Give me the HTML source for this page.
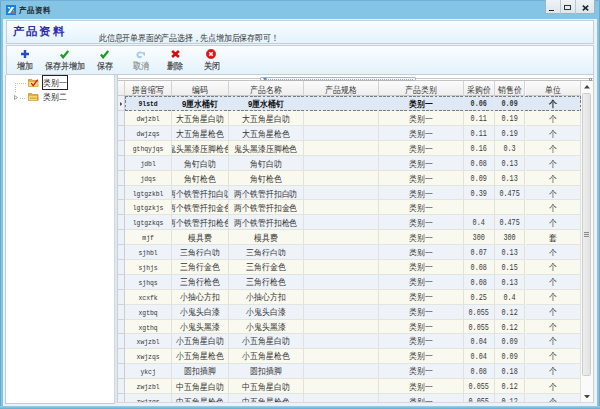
<!DOCTYPE html>
<html><head><meta charset="utf-8">
<style>
*{margin:0;padding:0;box-sizing:border-box}
html,body{width:600px;height:409px;overflow:hidden}
body{position:relative;background:#84c4e4;font-family:"Liberation Sans",sans-serif;color:#333}
.abs{position:absolute}
#frameL{left:0;top:0;width:1px;height:409px;background:#6aa8cc}
#frameB{left:0;top:406px;width:600px;height:3px;background:linear-gradient(#9ccfea,#78bbe0 60%,#68a8cf)}
#frameT{left:0;top:0;width:600px;height:1px;background:#72b0d6}
#frameR{left:599px;top:0;width:1px;height:409px;background:#6aa8cc}
#client{left:3px;top:19px;width:594px;height:387px;background:#eaf3f9}
#ticon{left:5.9px;top:4.5px;width:10.3px;height:10.5px;background:#1a7fd0}
#ttext{left:18.5px;top:4.6px;font-size:7.8px;line-height:12px;color:#111;white-space:nowrap;-webkit-text-stroke:0.25px #222;transform:scaleY(1.08)}
.wb{top:0;height:14.3px;background:linear-gradient(#eef3f6,#dfe6eb);border:1px solid #9fb4c2;border-top:none}
#pHead{left:5.8px;top:20.3px;width:588.2px;height:23.4px;border:1px solid #c5ced6;background:linear-gradient(#fbfdff,#e3f2fb)}
#title{left:12.6px;top:24.2px;font-size:11.8px;line-height:14px;letter-spacing:1.35px;font-weight:bold;color:#2c2cac;white-space:nowrap;transform:scaleY(0.97)}
#sub{left:99px;top:32.6px;font-size:7.55px;letter-spacing:-0.2px;line-height:10px;color:#333;white-space:nowrap;transform:scaleY(1.13);transform-origin:0 0}
#pTool{left:5.8px;top:44.7px;width:588.2px;height:30.8px;border:1px solid #c5ced6;box-shadow:0 1px 0 #d3dbe2;background:linear-gradient(#fbfdff,#e3f2fb)}
.tl{top:61.2px;font-size:7.8px;line-height:10px;color:#3a3a3a;white-space:nowrap;transform:scaleY(1.12);transform-origin:0 0;-webkit-text-stroke:0.15px #444}
#pTree{left:5px;top:75px;width:109px;height:328.7px;border:1px solid #c2cbd3;border-top:none;border-right:none;background:#fff}
#split{left:114px;top:75px;width:3px;height:328.7px;background:#dfe8ef;border-left:1px solid #cfd9e1}
#pGrid{left:117px;top:75px;width:476.5px;height:328px;border:1px solid #c8d0d6;border-top:none;border-bottom-color:#d2dae0;background:#fff}
#grid{left:117.5px;top:81px;width:463.3px;height:320.8px;overflow:hidden}
.hdr{position:absolute;left:0;top:0;width:100%;height:14px}
.hc{position:absolute;top:0;height:14px;background:linear-gradient(#fbfbfb,#eeeeee);border-right:1px solid #d3d3d3;border-bottom:1px solid #c8c8c8;font-size:7.6px;text-align:center;color:#333;white-space:nowrap;overflow:hidden}
.hc span{display:inline-block;transform:translateY(1.3px) scaleY(1.15)}
.row{position:absolute;left:0;width:100%}
.c{position:absolute;top:0;height:100%;border-right:1px solid #e2e2dc;border-bottom:1px solid #e2e4e0;text-align:center;white-space:nowrap;overflow:hidden;color:#333;line-height:14px}
.rh{position:absolute;top:0;height:100%;background:#eef2f8;border-right:1px solid #c6ced8;border-bottom:1px solid #cdd4dc}
.c{display:flex;justify-content:center}
.c span{display:block;line-height:14px;height:14px;flex:none}
.cn span{font-size:7.8px;letter-spacing:-0.12px;transform:translateY(1.2px) scaleY(1.15)}
.py span{font-family:"Liberation Mono",monospace;font-size:6.4px;transform:translateY(1.6px)}
.num span{font-family:"Liberation Mono",monospace;font-size:6.8px;transform:translateY(1px) scaleY(1.2);color:#3a3a3a}
.sel .c{font-weight:bold;color:#111;border-right-color:#e4eaf2}
.sel .py span{transform:translateY(2px)}
.dh{height:1px;background:repeating-linear-gradient(90deg,#7c7c7c 0 2.8px,transparent 2.8px 4.3px)}
.dv{width:1px;background:repeating-linear-gradient(180deg,#7c7c7c 0 2.8px,transparent 2.8px 4.3px)}
#sb{left:581px;top:81px;width:12px;height:321px;background:#fafafa}
#thumb{left:582.3px;top:92.5px;width:9.2px;height:283.8px;background:linear-gradient(90deg,#eeeeee,#e2e2e2);border:1px solid #cdcdcd;border-radius:1.5px}
</style></head><body>
<div id="frameL" class="abs"></div><div id="frameR" class="abs"></div><div id="frameT" class="abs"></div><div id="frameB" class="abs"></div>
<div id="client" class="abs"></div>
<!-- title bar -->
<div id="ticon" class="abs"><svg width="10.3" height="10.5" viewBox="0 0 10.3 10.5" style="position:absolute;left:0;top:0"><path d="M1.5 2.1 L4.3 2.1 L3.3 4.2Z" fill="#f4f8fc"/><path d="M5.6 2.1 L8.3 2.1 L4.2 8.3 L1.6 8.3Z" fill="#eef2f6"/><path d="M7.6 5.1 L9.2 8.4 L5.9 8.4Z" fill="#e8682a"/><circle cx="7.6" cy="5.6" r="0.5" fill="#f0c030"/></svg></div>
<div id="ttext" class="abs">产品资料</div>
<div class="abs wb" style="left:545px;width:50px"></div>
<div class="abs" style="left:560px;top:0;width:1px;height:14px;background:#b9c8d2"></div>
<div class="abs" style="left:575px;top:0;width:1px;height:14px;background:#b9c8d2"></div>
<div class="abs" style="left:548.5px;top:9.5px;width:5.5px;height:1.6px;background:#222"></div>
<div class="abs" style="left:564px;top:4.5px;width:7px;height:5.5px;border:1px solid #333;border-top-width:1.6px"></div>
<svg class="abs" style="left:582px;top:4.5px" width="7" height="6" viewBox="0 0 7 6"><path d="M0.8 0.6 L6.2 5.4 M6.2 0.6 L0.8 5.4" stroke="#222" stroke-width="1.5"/></svg>
<!-- header panel -->
<div id="pHead" class="abs"></div>
<div id="title" class="abs">产品资料</div>
<div id="sub" class="abs">此信息开单界面的产品选择，先点增加后保存即可！</div>
<!-- toolbar -->
<div id="pTool" class="abs"></div>
<svg class="abs" style="left:21px;top:50.2px" width="8" height="8" viewBox="0 0 8 8"><path d="M2.8 0 H5.2 V2.8 H8 V5.2 H5.2 V8 H2.8 V5.2 H0 V2.8 H2.8Z" fill="#1f4fc4"/></svg>
<div class="abs tl" style="left:17.2px">增加</div>
<svg class="abs" style="left:60px;top:50px" width="9" height="9" viewBox="0 0 9 9"><path d="M0.9 4.6 L3.1 7.3 L8.3 0.9" stroke="#16a016" stroke-width="2.3" fill="none"/></svg>
<div class="abs tl" style="left:45.3px">保存并增加</div>
<svg class="abs" style="left:100px;top:50px" width="9" height="9" viewBox="0 0 9 9"><path d="M0.9 4.6 L3.1 7.3 L8.3 0.9" stroke="#16a016" stroke-width="2.3" fill="none"/></svg>
<div class="abs tl" style="left:97.3px">保存</div>
<svg class="abs" style="left:135px;top:50px" width="11" height="9" viewBox="0 0 11 9"><path d="M6.6 3.2 A2.4 2.4 0 1 0 6.6 6.4" stroke="#a8c8ec" stroke-width="1.9" fill="none"/><path d="M5.8 2.2 L10 2.2 L10 6.2Z" fill="#a8c8ec"/></svg>
<div class="abs tl" style="left:132.7px;color:#b4b4b4">取消</div>
<svg class="abs" style="left:171px;top:50.2px" width="9" height="8" viewBox="0 0 9 8"><path d="M1.1 1 L7.9 7 M7.9 1 L1.1 7" stroke="#d80c0c" stroke-width="2.6"/></svg>
<div class="abs tl" style="left:167.3px">删除</div>
<svg class="abs" style="left:206.2px;top:48.8px" width="10" height="10" viewBox="0 0 10 10"><circle cx="5" cy="5" r="4.7" fill="#e61212" stroke="#c02020" stroke-width="0.6"/><path d="M3.2 3.2 L6.8 6.8 M6.8 3.2 L3.2 6.8" stroke="#fff" stroke-width="1.5"/></svg>
<div class="abs tl" style="left:204px">关闭</div>
<!-- tree -->
<div id="pTree" class="abs"></div><div id="split" class="abs"></div>
<div class="abs" style="left:14.5px;top:83px;width:11px;height:1px;background:repeating-linear-gradient(90deg,#bdbdbd 0 1px,transparent 1px 2px)"></div>
<div class="abs" style="left:14.5px;top:83px;width:1px;height:9px;background:repeating-linear-gradient(180deg,#bdbdbd 0 1px,transparent 1px 2px)"></div>
<div class="abs" style="left:20px;top:97.5px;width:5.5px;height:1px;background:repeating-linear-gradient(90deg,#c4c4c4 0 1px,transparent 1px 2px)"></div>
<svg class="abs" style="left:14px;top:95px" width="4" height="5" viewBox="0 0 4 5"><path d="M0.5 0.5 L3.5 2.5 L0.5 4.5Z" fill="#fff" stroke="#8a8a8a" stroke-width="0.8"/></svg>
<svg class="abs" style="left:28px;top:79.2px" width="10.5" height="8" viewBox="0 0 10.5 8"><path d="M0.4 0.6 H3.8 L4.8 1.6 H10 V7.6 H0.4Z" fill="#e2b440" stroke="#b98a18" stroke-width="0.7"/><path d="M0.8 3 H9.7 V7.3 H0.8Z" fill="#f7dc80"/><path d="M3.2 4.2 L5.2 6.6 L9.6 0.6" stroke="#e01818" stroke-width="1.3" fill="none"/></svg>
<div class="abs" style="left:42px;top:75.4px;width:26px;height:14.3px;border:1px solid #222;background:#fff"></div>
<div class="abs" style="left:43.3px;top:78.9px;font-size:7.7px;line-height:10px;color:#1a1a1a;transform:scaleY(1.15);transform-origin:0 50%">类别一</div>
<svg class="abs" style="left:28px;top:93px" width="10.5" height="8" viewBox="0 0 10.5 8"><path d="M0.4 0.6 H3.8 L4.8 1.6 H10 V7.6 H0.4Z" fill="#e2b440" stroke="#b98a18" stroke-width="0.7"/><path d="M0.8 3.2 H9.7 V7.3 H0.8Z" fill="#f7dc80"/><path d="M2 5.2 H8.6" stroke="#c8961c" stroke-width="1"/><path d="M9.7 3.5 V7" stroke="#d04040" stroke-width="0.6"/></svg>
<div class="abs" style="left:43.3px;top:93px;font-size:7.7px;line-height:10px;color:#1a1a1a;transform:scaleY(1.15);transform-origin:0 50%">类别二</div>
<!-- grid -->
<div id="pGrid" class="abs"></div>
<div class="abs" style="left:118px;top:77.6px;width:475px;height:1px;background:#c6c6c6"></div>
<div class="abs" style="left:118px;top:80px;width:475px;height:1px;background:#c2c2c2"></div>
<div class="abs" style="left:259.5px;top:77.3px;width:156px;height:4px;border:1px solid #b4b4b4;border-radius:1px;background:#f6f6f6"></div>
<div class="abs" style="left:264px;top:78.8px;width:150px;height:1px;background:repeating-linear-gradient(90deg,#7ab4ec 0 1px,transparent 1px 2px)"></div>
<svg class="abs" style="left:262.5px;top:78px" width="4" height="2.5" viewBox="0 0 4 2.5"><path d="M0 0 H4 L2 2.5Z" fill="#3a8ee0"/></svg>
<div id="grid" class="abs">
<div class="hdr"><div class="hc" style="height:15.20px;line-height:15.20px;left:0;width:7.50px"></div><div class="hc" style="height:15.20px;line-height:15.20px;left:7.50px;width:47.20px"><span>拼音缩写</span></div><div class="hc" style="height:15.20px;line-height:15.20px;left:54.70px;width:56.60px"><span>编码</span></div><div class="hc" style="height:15.20px;line-height:15.20px;left:111.30px;width:75.00px"><span>产品名称</span></div><div class="hc" style="height:15.20px;line-height:15.20px;left:186.30px;width:75.50px"><span>产品规格</span></div><div class="hc" style="height:15.20px;line-height:15.20px;left:261.80px;width:84.50px"><span>产品类别</span></div><div class="hc" style="height:15.20px;line-height:15.20px;left:346.30px;width:30.90px"><span>采购价</span></div><div class="hc" style="height:15.20px;line-height:15.20px;left:377.20px;width:30.80px"><span>销售价</span></div><div class="hc" style="height:15.20px;line-height:15.20px;left:408.00px;width:55.80px"><span>单位</span></div></div>
<div class="row sel" style="top:15.20px;height:14.89px;background:#dfe9f6"><div class="rh" style="left:0;width:7.50px"></div><div class="c py" style="left:7.50px;width:47.20px"><span>9lstd</span></div><div class="c cn" style="left:54.70px;width:56.60px"><span>9厘水桶钉</span></div><div class="c cn" style="left:111.30px;width:75.00px"><span>9厘水桶钉</span></div><div class="c cn" style="left:186.30px;width:75.50px"><span></span></div><div class="c cn" style="left:261.80px;width:84.50px"><span>类别一</span></div><div class="c num" style="left:346.30px;width:30.90px"><span>0.06</span></div><div class="c num" style="left:377.20px;width:30.80px"><span>0.09</span></div><div class="c cn" style="left:408.00px;width:55.80px"><span>个</span></div></div>
<div class="row" style="top:30.09px;height:14.89px;background:#f9f9ef"><div class="rh" style="left:0;width:7.50px"></div><div class="c py" style="left:7.50px;width:47.20px"><span>dwjzbl</span></div><div class="c cn" style="left:54.70px;width:56.60px"><span>大五角星白叻</span></div><div class="c cn" style="left:111.30px;width:75.00px"><span>大五角星白叻</span></div><div class="c cn" style="left:186.30px;width:75.50px"><span></span></div><div class="c cn" style="left:261.80px;width:84.50px"><span>类别一</span></div><div class="c num" style="left:346.30px;width:30.90px"><span>0.11</span></div><div class="c num" style="left:377.20px;width:30.80px"><span>0.19</span></div><div class="c cn" style="left:408.00px;width:55.80px"><span>个</span></div></div>
<div class="row" style="top:44.98px;height:14.89px;background:#eef2f9"><div class="rh" style="left:0;width:7.50px"></div><div class="c py" style="left:7.50px;width:47.20px"><span>dwjzqs</span></div><div class="c cn" style="left:54.70px;width:56.60px"><span>大五角星枪色</span></div><div class="c cn" style="left:111.30px;width:75.00px"><span>大五角星枪色</span></div><div class="c cn" style="left:186.30px;width:75.50px"><span></span></div><div class="c cn" style="left:261.80px;width:84.50px"><span>类别一</span></div><div class="c num" style="left:346.30px;width:30.90px"><span>0.11</span></div><div class="c num" style="left:377.20px;width:30.80px"><span>0.19</span></div><div class="c cn" style="left:408.00px;width:55.80px"><span>个</span></div></div>
<div class="row" style="top:59.87px;height:14.89px;background:#f9f9ef"><div class="rh" style="left:0;width:7.50px"></div><div class="c py" style="left:7.50px;width:47.20px"><span>gthqyjqs</span></div><div class="c cn" style="left:54.70px;width:56.60px"><span>鬼头黑漆压脚枪色</span></div><div class="c cn" style="left:111.30px;width:75.00px"><span>鬼头黑漆压脚枪色</span></div><div class="c cn" style="left:186.30px;width:75.50px"><span></span></div><div class="c cn" style="left:261.80px;width:84.50px"><span>类别一</span></div><div class="c num" style="left:346.30px;width:30.90px"><span>0.16</span></div><div class="c num" style="left:377.20px;width:30.80px"><span>0.3</span></div><div class="c cn" style="left:408.00px;width:55.80px"><span>个</span></div></div>
<div class="row" style="top:74.76px;height:14.89px;background:#eef2f9"><div class="rh" style="left:0;width:7.50px"></div><div class="c py" style="left:7.50px;width:47.20px"><span>jdbl</span></div><div class="c cn" style="left:54.70px;width:56.60px"><span>角钉白叻</span></div><div class="c cn" style="left:111.30px;width:75.00px"><span>角钉白叻</span></div><div class="c cn" style="left:186.30px;width:75.50px"><span></span></div><div class="c cn" style="left:261.80px;width:84.50px"><span>类别一</span></div><div class="c num" style="left:346.30px;width:30.90px"><span>0.08</span></div><div class="c num" style="left:377.20px;width:30.80px"><span>0.13</span></div><div class="c cn" style="left:408.00px;width:55.80px"><span>个</span></div></div>
<div class="row" style="top:89.64px;height:14.89px;background:#f9f9ef"><div class="rh" style="left:0;width:7.50px"></div><div class="c py" style="left:7.50px;width:47.20px"><span>jdqs</span></div><div class="c cn" style="left:54.70px;width:56.60px"><span>角钉枪色</span></div><div class="c cn" style="left:111.30px;width:75.00px"><span>角钉枪色</span></div><div class="c cn" style="left:186.30px;width:75.50px"><span></span></div><div class="c cn" style="left:261.80px;width:84.50px"><span>类别一</span></div><div class="c num" style="left:346.30px;width:30.90px"><span>0.09</span></div><div class="c num" style="left:377.20px;width:30.80px"><span>0.13</span></div><div class="c cn" style="left:408.00px;width:55.80px"><span>个</span></div></div>
<div class="row" style="top:104.53px;height:14.89px;background:#eef2f9"><div class="rh" style="left:0;width:7.50px"></div><div class="c py" style="left:7.50px;width:47.20px"><span>lgtgzkbl</span></div><div class="c cn" style="left:54.70px;width:56.60px"><span>两个铁管扦扣白叻</span></div><div class="c cn" style="left:111.30px;width:75.00px"><span>两个铁管扦扣白叻</span></div><div class="c cn" style="left:186.30px;width:75.50px"><span></span></div><div class="c cn" style="left:261.80px;width:84.50px"><span>类别一</span></div><div class="c num" style="left:346.30px;width:30.90px"><span>0.39</span></div><div class="c num" style="left:377.20px;width:30.80px"><span>0.475</span></div><div class="c cn" style="left:408.00px;width:55.80px"><span>个</span></div></div>
<div class="row" style="top:119.42px;height:14.89px;background:#f9f9ef"><div class="rh" style="left:0;width:7.50px"></div><div class="c py" style="left:7.50px;width:47.20px"><span>lgtgzkjs</span></div><div class="c cn" style="left:54.70px;width:56.60px"><span>两个铁管扦扣金色</span></div><div class="c cn" style="left:111.30px;width:75.00px"><span>两个铁管扦扣金色</span></div><div class="c cn" style="left:186.30px;width:75.50px"><span></span></div><div class="c cn" style="left:261.80px;width:84.50px"><span>类别一</span></div><div class="c num" style="left:346.30px;width:30.90px"><span></span></div><div class="c num" style="left:377.20px;width:30.80px"><span></span></div><div class="c cn" style="left:408.00px;width:55.80px"><span>个</span></div></div>
<div class="row" style="top:134.31px;height:14.89px;background:#eef2f9"><div class="rh" style="left:0;width:7.50px"></div><div class="c py" style="left:7.50px;width:47.20px"><span>lgtgzkqs</span></div><div class="c cn" style="left:54.70px;width:56.60px"><span>两个铁管扦扣枪色</span></div><div class="c cn" style="left:111.30px;width:75.00px"><span>两个铁管扦扣枪色</span></div><div class="c cn" style="left:186.30px;width:75.50px"><span></span></div><div class="c cn" style="left:261.80px;width:84.50px"><span>类别一</span></div><div class="c num" style="left:346.30px;width:30.90px"><span>0.4</span></div><div class="c num" style="left:377.20px;width:30.80px"><span>0.475</span></div><div class="c cn" style="left:408.00px;width:55.80px"><span>个</span></div></div>
<div class="row" style="top:149.20px;height:14.89px;background:#f9f9ef"><div class="rh" style="left:0;width:7.50px"></div><div class="c py" style="left:7.50px;width:47.20px"><span>mjf</span></div><div class="c cn" style="left:54.70px;width:56.60px"><span>模具费</span></div><div class="c cn" style="left:111.30px;width:75.00px"><span>模具费</span></div><div class="c cn" style="left:186.30px;width:75.50px"><span></span></div><div class="c cn" style="left:261.80px;width:84.50px"><span>类别一</span></div><div class="c num" style="left:346.30px;width:30.90px"><span>300</span></div><div class="c num" style="left:377.20px;width:30.80px"><span>300</span></div><div class="c cn" style="left:408.00px;width:55.80px"><span>套</span></div></div>
<div class="row" style="top:164.09px;height:14.89px;background:#eef2f9"><div class="rh" style="left:0;width:7.50px"></div><div class="c py" style="left:7.50px;width:47.20px"><span>sjhbl</span></div><div class="c cn" style="left:54.70px;width:56.60px"><span>三角行白叻</span></div><div class="c cn" style="left:111.30px;width:75.00px"><span>三角行白叻</span></div><div class="c cn" style="left:186.30px;width:75.50px"><span></span></div><div class="c cn" style="left:261.80px;width:84.50px"><span>类别一</span></div><div class="c num" style="left:346.30px;width:30.90px"><span>0.07</span></div><div class="c num" style="left:377.20px;width:30.80px"><span>0.13</span></div><div class="c cn" style="left:408.00px;width:55.80px"><span>个</span></div></div>
<div class="row" style="top:178.98px;height:14.89px;background:#f9f9ef"><div class="rh" style="left:0;width:7.50px"></div><div class="c py" style="left:7.50px;width:47.20px"><span>sjhjs</span></div><div class="c cn" style="left:54.70px;width:56.60px"><span>三角行金色</span></div><div class="c cn" style="left:111.30px;width:75.00px"><span>三角行金色</span></div><div class="c cn" style="left:186.30px;width:75.50px"><span></span></div><div class="c cn" style="left:261.80px;width:84.50px"><span>类别一</span></div><div class="c num" style="left:346.30px;width:30.90px"><span>0.08</span></div><div class="c num" style="left:377.20px;width:30.80px"><span>0.15</span></div><div class="c cn" style="left:408.00px;width:55.80px"><span>个</span></div></div>
<div class="row" style="top:193.87px;height:14.89px;background:#eef2f9"><div class="rh" style="left:0;width:7.50px"></div><div class="c py" style="left:7.50px;width:47.20px"><span>sjhqs</span></div><div class="c cn" style="left:54.70px;width:56.60px"><span>三角行枪色</span></div><div class="c cn" style="left:111.30px;width:75.00px"><span>三角行枪色</span></div><div class="c cn" style="left:186.30px;width:75.50px"><span></span></div><div class="c cn" style="left:261.80px;width:84.50px"><span>类别一</span></div><div class="c num" style="left:346.30px;width:30.90px"><span>0.08</span></div><div class="c num" style="left:377.20px;width:30.80px"><span>0.13</span></div><div class="c cn" style="left:408.00px;width:55.80px"><span>个</span></div></div>
<div class="row" style="top:208.76px;height:14.89px;background:#f9f9ef"><div class="rh" style="left:0;width:7.50px"></div><div class="c py" style="left:7.50px;width:47.20px"><span>xcxfk</span></div><div class="c cn" style="left:54.70px;width:56.60px"><span>小抽心方扣</span></div><div class="c cn" style="left:111.30px;width:75.00px"><span>小抽心方扣</span></div><div class="c cn" style="left:186.30px;width:75.50px"><span></span></div><div class="c cn" style="left:261.80px;width:84.50px"><span>类别一</span></div><div class="c num" style="left:346.30px;width:30.90px"><span>0.25</span></div><div class="c num" style="left:377.20px;width:30.80px"><span>0.4</span></div><div class="c cn" style="left:408.00px;width:55.80px"><span>个</span></div></div>
<div class="row" style="top:223.65px;height:14.89px;background:#eef2f9"><div class="rh" style="left:0;width:7.50px"></div><div class="c py" style="left:7.50px;width:47.20px"><span>xgtbq</span></div><div class="c cn" style="left:54.70px;width:56.60px"><span>小鬼头白漆</span></div><div class="c cn" style="left:111.30px;width:75.00px"><span>小鬼头白漆</span></div><div class="c cn" style="left:186.30px;width:75.50px"><span></span></div><div class="c cn" style="left:261.80px;width:84.50px"><span>类别一</span></div><div class="c num" style="left:346.30px;width:30.90px"><span>0.055</span></div><div class="c num" style="left:377.20px;width:30.80px"><span>0.12</span></div><div class="c cn" style="left:408.00px;width:55.80px"><span>个</span></div></div>
<div class="row" style="top:238.53px;height:14.89px;background:#f9f9ef"><div class="rh" style="left:0;width:7.50px"></div><div class="c py" style="left:7.50px;width:47.20px"><span>xgthq</span></div><div class="c cn" style="left:54.70px;width:56.60px"><span>小鬼头黑漆</span></div><div class="c cn" style="left:111.30px;width:75.00px"><span>小鬼头黑漆</span></div><div class="c cn" style="left:186.30px;width:75.50px"><span></span></div><div class="c cn" style="left:261.80px;width:84.50px"><span>类别一</span></div><div class="c num" style="left:346.30px;width:30.90px"><span>0.055</span></div><div class="c num" style="left:377.20px;width:30.80px"><span>0.12</span></div><div class="c cn" style="left:408.00px;width:55.80px"><span>个</span></div></div>
<div class="row" style="top:253.42px;height:14.89px;background:#eef2f9"><div class="rh" style="left:0;width:7.50px"></div><div class="c py" style="left:7.50px;width:47.20px"><span>xwjzbl</span></div><div class="c cn" style="left:54.70px;width:56.60px"><span>小五角星白叻</span></div><div class="c cn" style="left:111.30px;width:75.00px"><span>小五角星白叻</span></div><div class="c cn" style="left:186.30px;width:75.50px"><span></span></div><div class="c cn" style="left:261.80px;width:84.50px"><span>类别一</span></div><div class="c num" style="left:346.30px;width:30.90px"><span>0.04</span></div><div class="c num" style="left:377.20px;width:30.80px"><span>0.09</span></div><div class="c cn" style="left:408.00px;width:55.80px"><span>个</span></div></div>
<div class="row" style="top:268.31px;height:14.89px;background:#f9f9ef"><div class="rh" style="left:0;width:7.50px"></div><div class="c py" style="left:7.50px;width:47.20px"><span>xwjzqs</span></div><div class="c cn" style="left:54.70px;width:56.60px"><span>小五角星枪色</span></div><div class="c cn" style="left:111.30px;width:75.00px"><span>小五角星枪色</span></div><div class="c cn" style="left:186.30px;width:75.50px"><span></span></div><div class="c cn" style="left:261.80px;width:84.50px"><span>类别一</span></div><div class="c num" style="left:346.30px;width:30.90px"><span>0.04</span></div><div class="c num" style="left:377.20px;width:30.80px"><span>0.09</span></div><div class="c cn" style="left:408.00px;width:55.80px"><span>个</span></div></div>
<div class="row" style="top:283.20px;height:14.89px;background:#eef2f9"><div class="rh" style="left:0;width:7.50px"></div><div class="c py" style="left:7.50px;width:47.20px"><span>ykcj</span></div><div class="c cn" style="left:54.70px;width:56.60px"><span>圆扣插脚</span></div><div class="c cn" style="left:111.30px;width:75.00px"><span>圆扣插脚</span></div><div class="c cn" style="left:186.30px;width:75.50px"><span></span></div><div class="c cn" style="left:261.80px;width:84.50px"><span>类别一</span></div><div class="c num" style="left:346.30px;width:30.90px"><span>0.08</span></div><div class="c num" style="left:377.20px;width:30.80px"><span>0.18</span></div><div class="c cn" style="left:408.00px;width:55.80px"><span>个</span></div></div>
<div class="row" style="top:298.09px;height:14.89px;background:#f9f9ef"><div class="rh" style="left:0;width:7.50px"></div><div class="c py" style="left:7.50px;width:47.20px"><span>zwjzbl</span></div><div class="c cn" style="left:54.70px;width:56.60px"><span>中五角星白叻</span></div><div class="c cn" style="left:111.30px;width:75.00px"><span>中五角星白叻</span></div><div class="c cn" style="left:186.30px;width:75.50px"><span></span></div><div class="c cn" style="left:261.80px;width:84.50px"><span>类别一</span></div><div class="c num" style="left:346.30px;width:30.90px"><span>0.055</span></div><div class="c num" style="left:377.20px;width:30.80px"><span>0.12</span></div><div class="c cn" style="left:408.00px;width:55.80px"><span>个</span></div></div>
<div class="row" style="top:312.98px;height:14.89px;background:#eef2f9"><div class="rh" style="left:0;width:7.50px"></div><div class="c py" style="left:7.50px;width:47.20px"><span>zwjzqs</span></div><div class="c cn" style="left:54.70px;width:56.60px"><span>中五角星枪色</span></div><div class="c cn" style="left:111.30px;width:75.00px"><span>中五角星枪色</span></div><div class="c cn" style="left:186.30px;width:75.50px"><span></span></div><div class="c cn" style="left:261.80px;width:84.50px"><span>类别一</span></div><div class="c num" style="left:346.30px;width:30.90px"><span>0.055</span></div><div class="c num" style="left:377.20px;width:30.80px"><span>0.12</span></div><div class="c cn" style="left:408.00px;width:55.80px"><span>个</span></div></div>
</div>
<div class="abs dh" style="left:125px;top:96px;width:456px"></div>
<div class="abs dh" style="left:125px;top:110px;width:456px"></div>
<div class="abs dv" style="left:125px;top:96px;height:15px"></div>
<div class="abs dv" style="left:580px;top:96px;height:15px"></div>
<svg class="abs" style="left:119.9px;top:102.1px" width="2.5" height="4" viewBox="0 0 2.5 4"><path d="M0 0 L2.5 2 L0 4Z" fill="#555"/></svg>
<div id="sb" class="abs"></div>
<svg class="abs" style="left:584px;top:85.2px" width="6" height="3.5" viewBox="0 0 6 3.5"><path d="M0 3.5 L3 0 L6 3.5Z" fill="#444"/></svg>
<div id="thumb" class="abs"></div>
<div class="abs" style="left:584px;top:232px;width:5px;height:5px;background:repeating-linear-gradient(180deg,#8a8a8a 0 1px,#e4e4e4 1px 2px)"></div>
<div class="abs" style="left:588.5px;top:78.2px;width:3.5px;height:2.6px;border:0.8px solid #999;background:#fff"></div>
<svg class="abs" style="left:584px;top:394.5px" width="6" height="3.5" viewBox="0 0 6 3.5"><path d="M0 0 L3 3.5 L6 0Z" fill="#444"/></svg>
</body></html>
